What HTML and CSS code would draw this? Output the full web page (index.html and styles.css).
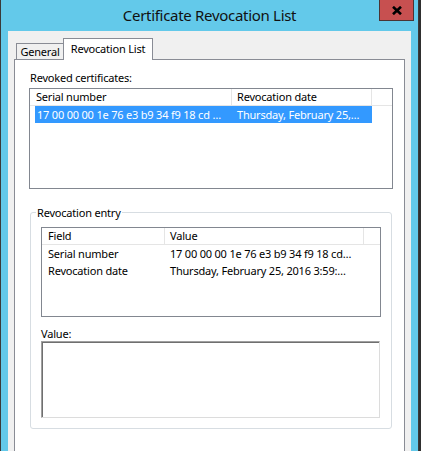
FILE: index.html
```html
<!DOCTYPE html>
<html>
<head>
<meta charset="utf-8">
<link rel="stylesheet" href="styles.css">
</head>
<body>
<div class="window">
  <div class="titlebar">
    <div class="title">Certificate Revocation List</div>
    <div class="close">
      <svg width="10" height="9" viewBox="0 0 10 9"><path d="M1 0.8 L9 8.2 M9 0.8 L1 8.2" stroke="#000" stroke-width="2.6" fill="none"/></svg>
    </div>
  </div>
  <div class="client">
    <div class="tabs">
      <div class="tab general">General</div>
      <div class="tab active">Revocation List</div>
    </div>
    <div class="panel">
      <div class="label first">Revoked certificates:</div>
      <div class="list list1">
        <div class="lhead">
          <div class="hc c1">Serial number</div>
          <div class="hc c2">Revocation date</div>
        </div>
        <div class="row sel">
          <div class="rc c1">17 00 00 00 1e 76 e3 b9 34 f9 18 cd …</div>
          <div class="rc c2">Thursday, February 25,…</div>
        </div>
      </div>
      <fieldset class="group">
        <legend>Revocation entry</legend>
        <div class="list list2">
          <div class="lhead">
            <div class="hc c1">Field</div>
            <div class="hc c2">Value</div>
          </div>
          <div class="row">
            <div class="rc c1">Serial number</div>
            <div class="rc c2">17 00 00 00 1e 76 e3 b9 34 f9 18 cd…</div>
          </div>
          <div class="row">
            <div class="rc c1">Revocation date</div>
            <div class="rc c2">Thursday, February 25, 2016 3:59:…</div>
          </div>
        </div>
        <div class="label value">Value:</div>
        <div class="textbox"></div>
      </fieldset>
    </div>
  </div>
</div>
</body>
</html>
```
FILE: styles.css
```css
* { box-sizing: border-box; }
html, body { margin: 0; padding: 0; }
body {
  width: 421px;
  height: 451px;
  overflow: hidden;
  background: #2f2f2f;
  font-family: "Noto Sans", sans-serif;
  font-size: 11px;
  letter-spacing: -0.2px;
  color: #000;
}
.window {
  width: 419px;
  height: 451px;
  border-left: 1px solid #3a3a3a;
  border-right: 1px solid #3a3a3a;
  background: #63c9ea;
  display: flex;
  flex-direction: column;
}
.titlebar {
  height: 31px;
  flex: none;
  display: grid;
}
.title, .close { grid-area: 1 / 1; }
.title {
  text-align: center;
  font-size: 15px;
  letter-spacing: -0.3px;
  line-height: 30px;
  color: #111;
}
.close {
  justify-self: end;
  align-self: start;
  width: 35px;
  height: 21px;
  margin-right: 4px;
  background: #c75050;
  border: 1px solid #4a3434;
  border-top: none;
  display: flex;
  align-items: center;
  justify-content: center;
}
.close svg { display: block; margin-top: 1px; }
.client {
  margin: 0 7px;
  flex: 1;
  background: #f0f0f0;
  padding-top: 7px;
  overflow: hidden;
}
.tabs {
  display: flex;
  align-items: flex-end;
  padding-left: 8px;
  margin-bottom: -1px;
  position: relative;
  z-index: 1;
}
.tab {
  border: 1px solid #898c95;
  border-bottom: none;
  text-align: center;
  line-height: 15px;
  white-space: nowrap;
}
.tab.general {
  width: 47px;
  height: 16px;
  border-right: none;
  margin-bottom: 1px;
  background: #f0f0f0;
}
.tab.active {
  width: 90px;
  height: 22px;
  padding-top: 2px;
  background: #fff;
}
.panel {
  margin-left: 6px;
  width: 391px;
  height: 420px;
  border: 1px solid #898c95;
  background: #fff;
  padding: 10px 0 0 14px;
}
.label {
  line-height: 15px;
  height: 15px;
}
.label.first { margin-left: 1px; }
.list {
  border: 1px solid #828790;
  background: #fff;
  overflow: hidden;
}
.list1 {
  margin-top: 3px;
  width: 364px;
  height: 101px;
}
.lhead {
  display: flex;
  height: 17px;
  border-bottom: 1px solid #e5e5e5;
  line-height: 16px;
}
.hc {
  border-right: 1px solid #e5e5e5;
  white-space: nowrap;
  overflow: hidden;
}
.list1 .hc.c1 { width: 202px; padding-left: 6px; }
.list1 .hc.c2 { width: 140px; padding-left: 5px; }
.row {
  display: flex;
  height: 17px;
  line-height: 17px;
  white-space: nowrap;
}
.rc { overflow: hidden; white-space: nowrap; }
.row.sel {
  margin-left: 5px;
  width: 337px;
  background: #3399ff;
  color: #fff;
}
.list1 .rc.c1 { width: 197px; padding-left: 2px; }
.list1 .rc.c2 { flex: 1; padding-left: 5px; }
.group {
  margin: 16px 0 0 1px;
  width: 362px;
  border: 1px solid #d7dde2;
  border-radius: 3px;
  padding: 7px 0 10px 0;
  min-width: 0;
}
.group legend {
  margin-left: 5px;
  padding: 0 1px;
  line-height: 15px;
}
.list2 {
  margin-left: 10px;
  width: 340px;
  height: 90px;
}
.list2 .hc.c1 { width: 123px; padding-left: 6px; }
.list2 .hc.c2 { width: 199px; padding-left: 5px; }
.list2 .rc.c1 { width: 123px; padding-left: 6px; }
.list2 .rc.c2 { flex: 1; padding-left: 5px; }
.label.value {
  margin: 9px 0 0 10px;
}
.textbox {
  margin-left: 10px;
  width: 339px;
  height: 77px;
  background: #fff;
  border-style: solid;
  border-width: 1px;
  border-color: #a0a0a0 #dcdcdc #dcdcdc #a0a0a0;
  box-shadow: inset 1px 1px 0 #6f6f6f;
}
```
